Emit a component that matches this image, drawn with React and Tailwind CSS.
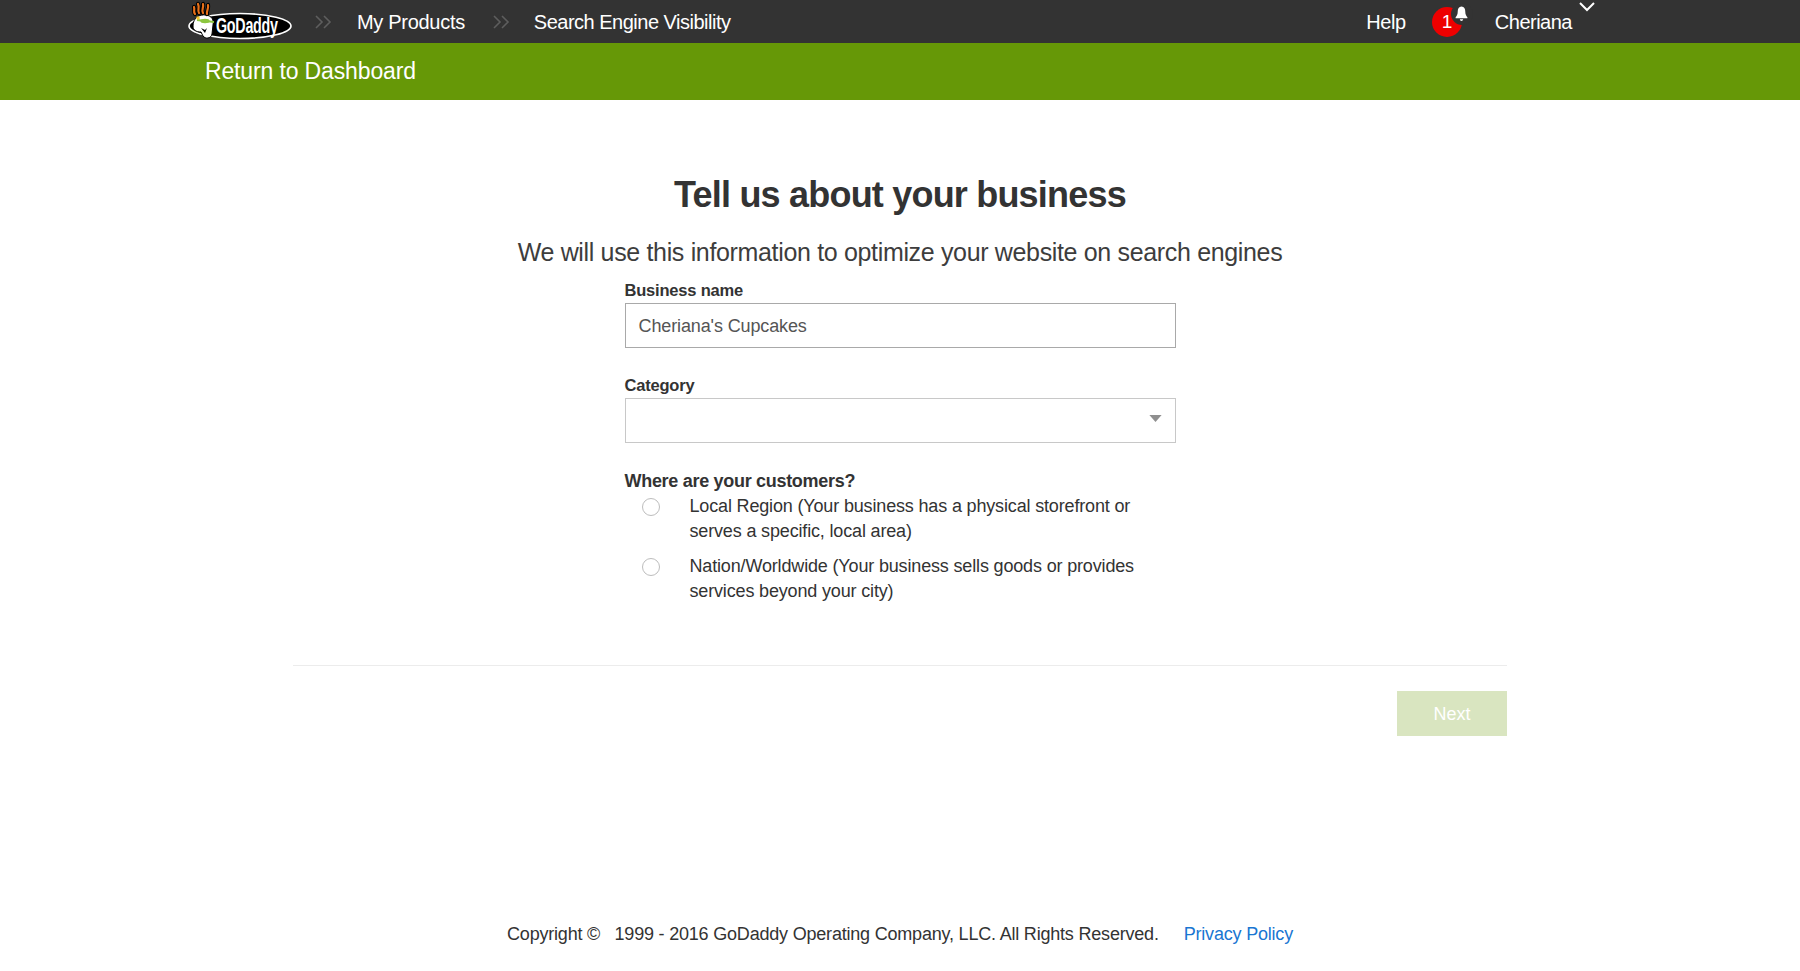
import React from "react";

// ── Logo ──────────────────────────────────────────────────────────────────────

const Logo = () => (
  <svg width="110" height="42" viewBox="0 0 110 42" className="block shrink-0">
    <ellipse cx="55" cy="25" rx="51" ry="12.5" fill="#000" stroke="#fff" strokeWidth="1.6" />
    <path d="M8 25 C8 17 14 13 21 14 C27 15 29 19 28 24 L27 33 C26 38 20 38 18 35 L16 31 C11 31 8 29 8 25 Z" fill="#fff" stroke="#000" strokeWidth="1" />
    <path d="M10 13 C8 11 10 9 9 6 M14 12 C12 9 15 7 13 3 M18 12 C16 9 19 7 18 3 M22 13 C21 10 24 8 23 4" stroke="#000" strokeWidth="4.2" strokeLinecap="round" fill="none" />
    <path d="M10 13 C8 11 10 9 9 6 M14 12 C12 9 15 7 13 3 M18 12 C16 9 19 7 18 3 M22 13 C21 10 24 8 23 4" stroke="#e8701a" strokeWidth="2.2" strokeLinecap="round" fill="none" />
    <path d="M12 19 L29 21" stroke="#8cc63f" strokeWidth="1.8" />
    <ellipse cx="20" cy="20" rx="4.6" ry="2.2" fill="#8cc63f" />
    <circle cx="13" cy="17" r="1.8" fill="#f4c430" />
    <path d="M16 27 L20 29 L22 27 L20 32 Z" fill="#000" />
    <text transform="translate(31 32) scale(0.84 1.35)" fontFamily="'Liberation Sans',sans-serif" fontWeight="700" fontSize="17" fill="#fff">GoDaddy</text>
  </svg>
);

// ── Header bits ───────────────────────────────────────────────────────────────

const Chevrons = () => (
  <svg width="18" height="14" viewBox="0 0 18 14" fill="none" stroke="#5e5e5e" strokeWidth="1.6" className="shrink-0">
    <path d="M1 1 L7 7 L1 13" />
    <path d="M9 1 L15 7 L9 13" />
  </svg>
);

const Bell = () => (
  <svg width="15" height="18" viewBox="0 0 14 16" fill="#fff">
    <path d="M7 1 C4.5 1 3.5 3 3.5 5.5 C3.5 8.5 2.5 10 1.5 11 L1.5 12 L12.5 12 L12.5 11 C11.5 10 10.5 8.5 10.5 5.5 C10.5 3 9.5 1 7 1 Z" />
    <path d="M5.5 13 C5.5 15 8.5 15 8.5 13 Z" />
  </svg>
);

const Header = () => (
  <header className="h-[43px] bg-[#333333] flex items-center text-white text-[20px] tracking-[-0.3px] pl-[185px]">
    <Logo />
    <div className="ml-[20px]"><Chevrons /></div>
    <a className="ml-[24px]">My Products</a>
    <div className="ml-[28px]"><Chevrons /></div>
    <a className="ml-[23px] tracking-[-0.5px]">Search Engine Visibility</a>
    <a className="ml-auto tracking-[-0.4px]">Help</a>
    <div className="relative ml-[26px] w-[30px] h-[30px] rounded-full bg-[#ee0000] flex items-center justify-center">
      <span className="text-[19px] leading-none">1</span>
      <span className="absolute -top-[4px] -right-[11px] w-[22px] h-[22px] rounded-full bg-[#333333] flex items-center justify-center">
        <Bell />
      </span>
    </div>
    <a className="ml-[33px] tracking-[-0.5px]">Cheriana</a>
    <svg width="16" height="10" viewBox="0 0 16 10" fill="none" stroke="#fff" strokeWidth="2" className="ml-[7px] mr-[205px] -mt-[30px] shrink-0">
      <path d="M1 1 L8 8 L15 1" />
    </svg>
  </header>
);

// ── Form ──────────────────────────────────────────────────────────────────────

const FieldLabel = ({ children, className = "text-[16.5px] tracking-[-0.2px]" }) => (
  <label className={`block leading-[20px] font-bold text-[#333333] ${className}`}>{children}</label>
);

const Radio = ({ line1, line2 }) => (
  <div className="flex">
    <span className="w-[18px] h-[18px] rounded-full border border-[#bdbdbd] bg-white ml-[17px] mt-[4px] shrink-0" />
    <div className="ml-[30px] text-[18px] leading-[25px] text-[#333333] tracking-[-0.16px]">
      <div>{line1}</div>
      <div>{line2}</div>
    </div>
  </div>
);

export default function App() {
  return (
    <div className="min-h-[971px] bg-white flex flex-col font-['Liberation_Sans',Arial,sans-serif]">
      <Header />
      <div className="h-[57px] bg-[#669807] flex items-center pl-[205px] text-white text-[23px] tracking-[-0.14px]">
        Return to Dashboard
      </div>

      <main className="flex flex-col items-center pt-[72px]">
        <h1 className="text-[36px] leading-[46px] font-bold text-[#333333] tracking-[-0.8px]">Tell us about your business</h1>
        <p className="mt-[19px] text-[25px] leading-[30px] text-[#3d3d3d] tracking-[-0.34px]">We will use this information to optimize your website on search engines</p>

        <form className="w-[551px] mt-[13px]">
          <FieldLabel>Business name</FieldLabel>
          <div className="mt-[3px] h-[45px] border border-[#a9a9a9] flex items-center px-[13px] pt-[1px] text-[18px] tracking-[-0.12px] text-[#555555]">
            Cheriana's Cupcakes
          </div>

          <div className="mt-[27px]"><FieldLabel>Category</FieldLabel></div>
          <div className="mt-[3px] h-[45px] border border-[#c8c8c8] flex items-center justify-end pr-[13px]">
            <svg width="13" height="7" viewBox="0 0 14 8" className="-mt-[5px]"><path d="M0 0 H14 L7 8 Z" fill="#8f8f8f" /></svg>
          </div>

          <div className="mt-[28px]"><FieldLabel className="text-[18px] tracking-[-0.3px]">Where are your customers?</FieldLabel></div>
          <div className="mt-[3px] flex flex-col gap-[10px]">
            <Radio line1="Local Region (Your business has a physical storefront or" line2="serves a specific, local area)" />
            <Radio line1="Nation/Worldwide (Your business sells goods or provides" line2="services beyond your city)" />
          </div>
        </form>

        <div className="w-[1214px] mt-[61px] border-t border-[#ececec] flex justify-end pt-[25px]">
          <button className="w-[110px] h-[45px] pt-[1px] bg-[#d9e5c0] text-white text-[18px]">Next</button>
        </div>
      </main>

      <footer className="mt-[186px] flex justify-center text-[18px] leading-[24px] text-[#333333] tracking-[-0.2px] whitespace-pre">
        <span>Copyright ©   1999 - 2016 GoDaddy Operating Company, LLC. All Rights Reserved.</span>
        <a className="ml-[25px] text-[#1976d2]">Privacy Policy</a>
      </footer>
    </div>
  );
}
